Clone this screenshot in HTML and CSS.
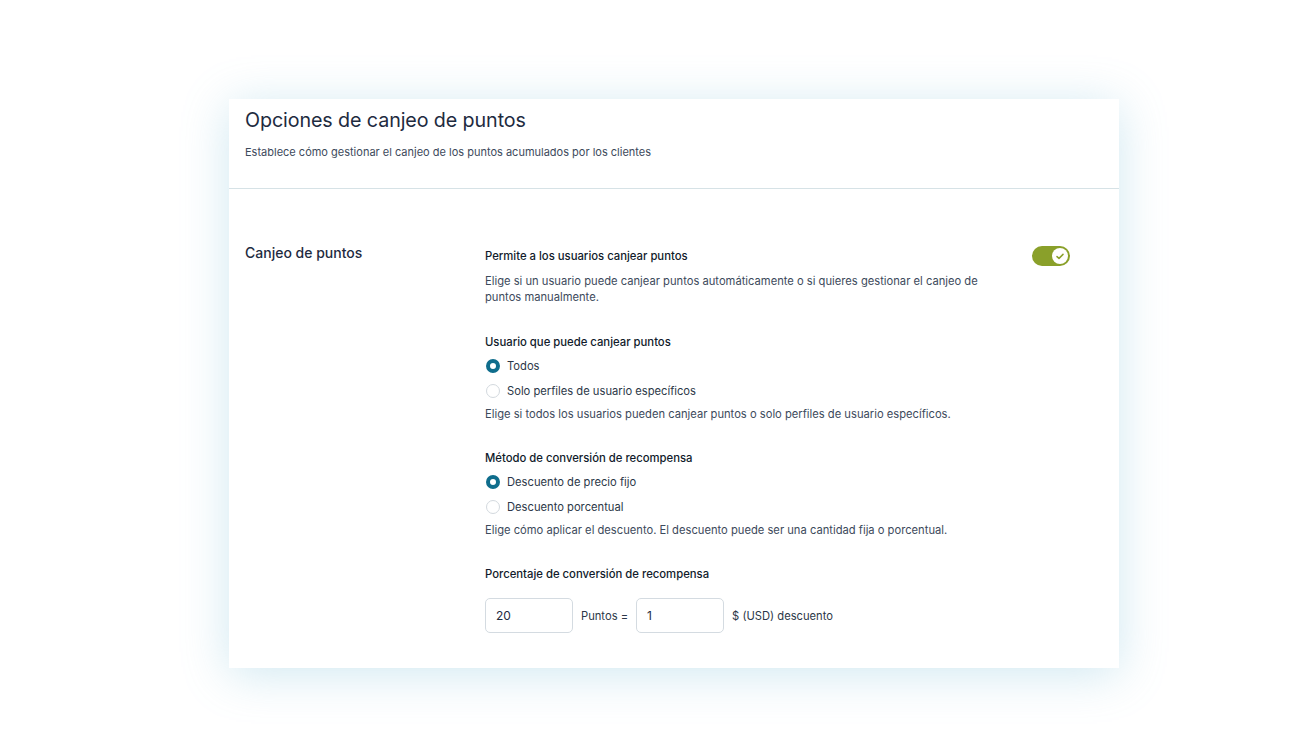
FILE: index.html
```html
<!DOCTYPE html>
<html lang="es">
<head>
<meta charset="utf-8">
<title>Opciones de canjeo de puntos</title>
<link rel="stylesheet" href="styles.css">
</head>
<body>
<main class="card">
  <header class="card-header">
    <h1 class="title">Opciones de canjeo de puntos</h1>
    <p class="subtitle">Establece cómo gestionar el canjeo de los puntos acumulados por los clientes</p>
  </header>
  <section class="section">
    <h2 class="section-label">Canjeo de puntos</h2>
    <div class="fields">
      <div class="field field-toggle">
        <div class="field-text">
          <div class="field-title">Permite a los usuarios canjear puntos</div>
          <p class="field-desc">Elige si un usuario puede canjear puntos automáticamente o si quieres gestionar el canjeo de puntos manualmente.</p>
        </div>
        <span class="toggle" role="switch" aria-checked="true">
          <span class="knob">
            <svg width="8" height="7" viewBox="0 0 8 7"><path d="M1 3.6 L3 5.4 L7 1.4" fill="none" stroke="#8aa02a" stroke-width="1.5" stroke-linecap="round" stroke-linejoin="round"/></svg>
          </span>
        </span>
      </div>

      <div class="field">
        <div class="field-title">Usuario que puede canjear puntos</div>
        <div class="radios">
          <label class="radio"><span class="dot checked"></span>Todos</label>
          <label class="radio"><span class="dot"></span>Solo perfiles de usuario específicos</label>
        </div>
        <p class="field-desc">Elige si todos los usuarios pueden canjear puntos o solo perfiles de usuario específicos.</p>
      </div>

      <div class="field">
        <div class="field-title">Método de conversión de recompensa</div>
        <div class="radios">
          <label class="radio"><span class="dot checked"></span>Descuento de precio fijo</label>
          <label class="radio"><span class="dot"></span>Descuento porcentual</label>
        </div>
        <p class="field-desc">Elige cómo aplicar el descuento. El descuento puede ser una cantidad fija o porcentual.</p>
      </div>

      <div class="field">
        <div class="field-title">Porcentaje de conversión de recompensa</div>
        <div class="conversion">
          <span class="input">20</span>
          <span class="unit">Puntos =</span>
          <span class="input">1</span>
          <span class="unit">$ (USD) descuento</span>
        </div>
      </div>
    </div>
  </section>
</main>
</body>
</html>
```

FILE: styles.css
```css
html, body {
  margin: 0;
  padding: 0;
  background: #ffffff;
}
body {
  font-family: Inter, "Noto Sans", sans-serif;
  color: #1f2d3d;
  padding-top: 99px;
  height: 642px;
}
.card {
  width: 890px;
  margin-left: 229px;
  height: 569px;
  background: #ffffff;
  box-shadow: 0 6px 44px rgba(110, 185, 210, 0.32);
  box-sizing: border-box;
}
.card-header {
  height: 90px;
  box-sizing: border-box;
  padding: 8px 16px 0;
  border-bottom: 1px solid #d6e2e6;
}
.title {
  margin: 0;
  font-size: 19.7px;
  font-weight: 400;
  line-height: 26px;
  color: #1e2b3f;
  letter-spacing: -0.1px;
}
.subtitle {
  margin: 11px 0 0;
  font-size: 11px;
  line-height: 16px;
  color: #3d4a5c;
}
.section {
  display: flex;
  padding: 55px 49px 0 16px;
}
.section-label {
  width: 240px;
  flex: none;
  margin: 0;
  font-size: 14px;
  font-weight: 500;
  line-height: 18px;
  color: #1e2b3f;
}
.fields {
  flex: 1;
  padding-top: 4px;
}
.field {
  margin-bottom: 28px;
}
.field-toggle {
  display: flex;
  justify-content: space-between;
  align-items: flex-start;
  margin-bottom: 29px;
}
.field-text {
  width: 520px;
}
.field-title {
  font-size: 11.3px;
  font-weight: 500;
  line-height: 16px;
  color: #111b2b;
}
.field-desc {
  margin: 0;
  font-size: 11.2px;
  line-height: 16px;
  color: #3d4a5c;
}
.field-toggle .field-desc {
  margin-top: 9px;
}
.toggle {
  width: 38px;
  height: 20px;
  border-radius: 10px;
  background: #8aa02a;
  display: flex;
  align-items: center;
  justify-content: flex-end;
  padding: 0 2px;
  box-sizing: border-box;
  margin-top: -2px;
}
.knob {
  width: 16px;
  height: 16px;
  border-radius: 50%;
  background: #ffffff;
  display: flex;
  align-items: center;
  justify-content: center;
}
.radios {
  display: flex;
  flex-direction: column;
  gap: 9px;
  margin: 8px 0 7px;
}
.radio {
  display: flex;
  align-items: center;
  gap: 7px;
  font-size: 11.2px;
  line-height: 16px;
  color: #2c3848;
}
.dot {
  width: 14px;
  height: 14px;
  border-radius: 50%;
  border: 1px solid #d3d9de;
  box-sizing: border-box;
  background: #fff;
  margin-left: 1px;
}
.dot.checked {
  border: 4.5px solid #0f6d8c;
}
.conversion {
  display: flex;
  align-items: center;
  margin-top: 16px;
}
.input {
  width: 88px;
  height: 35px;
  box-sizing: border-box;
  border: 1px solid #d4dbe1;
  border-radius: 5px;
  padding: 0 10px;
  display: flex;
  align-items: center;
  font-size: 12px;
  color: #1e2b3f;
}
.unit {
  font-size: 11.2px;
  color: #2c3848;
  padding: 0 8px;
}
```
